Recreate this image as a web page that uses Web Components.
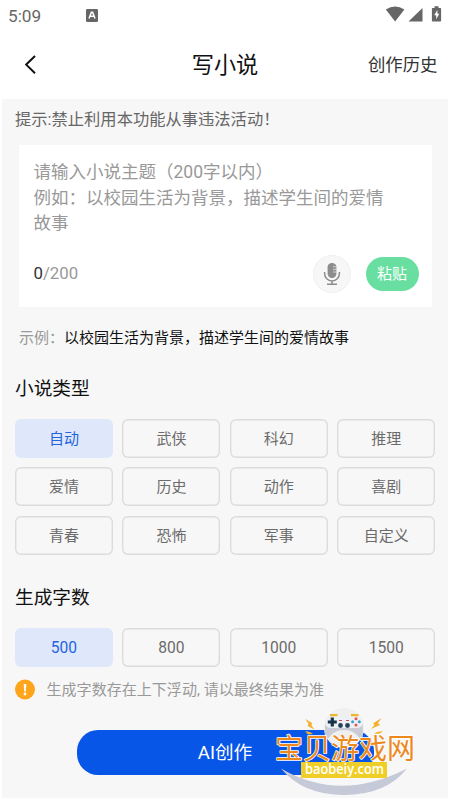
<!DOCTYPE html>
<html lang="zh-CN">
<head>
<meta charset="utf-8">
<title>写小说</title>
<style>
html,body{margin:0;height:100%;background:#fff}
body{font-family:Roboto,"Noto Sans CJK SC",sans-serif;overflow:hidden}
</style>
</head>
<body>
<novel-app></novel-app>
<script>
const define=(name,html)=>customElements.define(name,class extends HTMLElement{
  constructor(){super();const t=document.createElement('template');t.innerHTML=html;
    this.attachShadow({mode:'open'}).append(t.content.cloneNode(true));}
});

define('status-bar',`<style>
:host{display:flex;height:32px;box-sizing:border-box;padding:0 8px;align-items:center;color:#666;font-size:17.2px}
.t{width:78px;line-height:32px}
.sp{flex:1}
svg{display:block}
</style>
<span class="t">5:09</span>
<svg width="12" height="13" viewBox="0 0 12 13" style="margin-top:-2px"><rect width="12" height="13" rx="1.2" fill="#666"/><path d="M3 9.5 5.4 3.2h1.2L9 9.5M4.2 7.2h3.6" fill="none" stroke="#fff" stroke-width="1.5"/></svg>
<span class="sp"></span>
<svg width="57" height="18" viewBox="0 0 57 18" fill="#666" style="margin-top:-2px"><path d="M.8 3.400Q10 -2.300 19.400 3.400L10.100 15.500Z"/><path d="M37.500 2v13.500H23.500Z"/><path d="M49.500.2h4v1.700h1.800q.8 0 .8.8v12q0 .8-.8.8h-7.600q-.8 0-.8-.8v-12q0-.8.8-.8h1.800Z"/><path d="M52.400 4 49.200 9.200h2v4l3.100-5.400h-1.900Z" fill="#fff"/></svg>`);

define('nav-bar',`<style>
:host{display:grid;grid-template-columns:1fr auto 1fr;height:66.5px;align-items:center;padding:0 12.5px 0 12.5px;color:#111}
svg{display:block;margin-left:11.5px}
.h{font-size:22.200px;line-height:32px}
.r{justify-self:end;font-size:17.400px;line-height:26px;color:#333}
</style>
<svg width="14" height="20" viewBox="0 0 14 20"><path d="M11 1 2.200 9.600 11 18.200" fill="none" stroke="#111" stroke-width="2"/></svg>
<span class="h"><slot></slot></span><span class="r"><slot name="action"></slot></span>`);

define('theme-input',`<style>
:host{display:flex;flex-direction:column;box-sizing:border-box;background:#fff;height:162px;width:413px;margin-left:16.500px;padding:15px 13px 0 15px;font-size:17.500px;line-height:25.600px;color:#999}
.ph{height:76.500px;white-space:nowrap}
.row{display:flex;align-items:center;height:37.500px;margin-top:18.500px;font-size:16.800px}
.n{padding-top:1px}
b{font-weight:400;color:#333}
.sp{flex:1}
.mic{display:grid;place-items:center;box-sizing:border-box;width:37.500px;height:37.500px;border-radius:50%;background:#f7f7f7;border:1px solid #f0f0f0;margin-right:15px}
.paste{width:53px;height:33.500px;border-radius:17px;background:#68dfa0;color:#fff;font-size:15px;line-height:34px;text-align:center}
</style>
<div class="ph">请输入小说主题（200字以内）<br>例如：以校园生活为背景，描述学生间的爱情<br>故事</div>
<div class="row"><span class="n"><b>0</b>/200</span><span class="sp"></span>
<span class="mic"><svg width="18" height="24" viewBox="0 0 18 24"><rect x="4.600" y="1" width="8.800" height="15" rx="4.200" fill="#8d8d8d"/><path d="M1.600 10v1.500a7.400 7.400 0 0 0 14.800 0V10M9 19v3M4 22.300h10" fill="none" stroke="#8d8d8d" stroke-width="1.500"/><path d="M10 4.800h4M10 7.400h4M10 10h4" stroke="#ddd" stroke-width=".9"/></svg></span>
<span class="paste">粘贴</span></div>`);

define('option-grid',`<style>
:host{display:grid;grid-template-columns:repeat(4,98px);column-gap:9.400px;row-gap:9.800px;margin-left:13px}
</style><slot></slot>`);

define('option-chip',`<style>
:host{display:block;box-sizing:border-box;height:39px;box-shadow:inset 0 0 0 1.400px #dcdcdc;border-radius:6px;color:#6b6b6b;font-size:15px;line-height:40px;text-align:center}
:host([num]){font-size:15.600px;line-height:41px}
:host([on]){background:#dee8fa;box-shadow:none;color:#2563e0}
</style><slot></slot>`);

define('section-title',`<style>
:host{display:block;font-size:18.700px;line-height:28px;height:28px;padding-left:13px;color:#111}
</style><slot></slot>`);

define('info-note',`<style>
:host{display:flex;align-items:center;height:22px;padding-left:13px;gap:11.500px;color:#999;font-size:15.050px;line-height:22px}
svg{display:block}
span{padding-top:1px}
</style><svg width="20" height="21" viewBox="0 0 20 21"><circle cx="10" cy="10.500" r="10" fill="#ffa51c"/><path d="M8.700 5h2.600l-.5 7.600H9.200Z" fill="#fff"/><circle cx="10" cy="15" r="1.400" fill="#fff"/></svg><span><slot></slot></span>`);

define('create-button',`<style>
:host{display:block;width:297px;height:45px;margin:0 0 0 74.500px;border-radius:21px;background:#0756e8;color:#fff;font-size:18.600px;line-height:46px;text-align:center}
</style><slot></slot>`);

define('site-watermark',`<style>
:host{position:absolute;left:260px;top:700px;width:160px;height:98px}
svg{display:block}
.cn{font:400 28px "Noto Sans CJK SC",sans-serif}
.en{font:600 14px "Open Sans","Noto Sans",sans-serif}
</style><svg width="160" height="98" viewBox="0 0 160 98">
<circle cx="84" cy="28" r="20" fill="#efefef"/>
<path d="M21 68.500Q80 103 147 68.500Q126 95 84 95Q43 95 21 68.500Z" fill="#c5c9d8"/>
<path d="M67 18Q64.500 24 64.800 37Q67 41 71 35Q76 30 84 30Q92 30 97 35Q101 41 102.700 37Q103.500 24 101 18Z" fill="#c9ccd6"/>
<path d="M70 15.300h7.500M91 15.300h7.500" stroke="#efb52b" stroke-width="2.500"/>
<path d="M70 16.500H98Q103 17 102.800 23Q102 28 96 28H72Q65.500 28 65.200 23Q65 17 70 16.500Z" fill="#edf0f4"/>
<path d="M72.300 17.500v9M67.800 22h9" stroke="#173449" stroke-width="3.200"/>
<circle cx="80.500" cy="25.500" r="2.400" fill="#244259"/><circle cx="87.500" cy="25.500" r="2.400" fill="#244259"/>
<circle cx="96" cy="18.700" r="1.500" fill="#e84e54"/><circle cx="96" cy="25" r="1.500" fill="#e84e54"/><circle cx="92.600" cy="21.800" r="1.500" fill="#37a3c5"/><circle cx="99.300" cy="21.800" r="1.500" fill="#37a3c5"/><path d="M79 20.500h3M86 20.500h3" stroke="#c14f66"/>
<g fill="#f3b22d"><path d="M45.500 19 52 23l-.5 2.500 3 4-7-3.500 1-2Z"/><path d="M121.500 18 113 23.500l1.500 1.500-3.500 4 9-4-2-2Z"/><path d="m45 31 5 1 3 2-5 .5Z"/><path d="m123 31-6 1-3 2 6-.5Z"/></g>
<text class="cn" x="15" y="59" textLength="140" fill="#ed891c" stroke="#fff" stroke-width="1.500" stroke-linejoin="round" paint-order="stroke">宝贝游戏网</text>
<rect x="41" y="62" width="86" height="16" fill="#efcf27"/>
<text class="en" x="45" y="74.200" textLength="79" lengthAdjust="spacingAndGlyphs" fill="#fff">baobeiy.com</text>
</svg>`);

define('novel-app',`<style>
:host{display:block;width:450px;height:800px;position:relative;background:#fff}
main{box-sizing:border-box;display:flex;flex-direction:column;height:699.500px;margin:0 2px;background:#f7f7f7}
.tip{padding:9px 0 0 13px;font-size:16.300px;line-height:24px;height:37.500px;color:#666}
.ex{font-size:15px;line-height:22px;padding:19.500px 0 0 17px;color:#999;white-space:nowrap}
.ex b{font-weight:400;color:#111}
</style>
<status-bar></status-bar>
<nav-bar>写小说<span slot="action">创作历史</span></nav-bar>
<main>
<div class="tip">提示:禁止利用本功能从事违法活动！</div>
<theme-input></theme-input>
<div class="ex">示例：<b>以校园生活为背景，描述学生间的爱情故事</b></div>
<section-title style="margin-top:26px">小说类型</section-title>
<option-grid style="margin-top:16px">
<option-chip on>自动</option-chip><option-chip>武侠</option-chip><option-chip>科幻</option-chip><option-chip>推理</option-chip>
<option-chip>爱情</option-chip><option-chip>历史</option-chip><option-chip>动作</option-chip><option-chip>喜剧</option-chip>
<option-chip>青春</option-chip><option-chip>恐怖</option-chip><option-chip>军事</option-chip><option-chip>自定义</option-chip>
</option-grid>
<section-title style="margin-top:28.500px">生成字数</section-title>
<option-grid style="margin-top:16px">
<option-chip num on>500</option-chip><option-chip num>800</option-chip><option-chip num>1000</option-chip><option-chip num>1500</option-chip>
</option-grid>
<info-note style="margin-top:12px">生成字数存在上下浮动, 请以最终结果为准</info-note>
<create-button style="margin-top:29px">AI创作</create-button>
</main>
<site-watermark></site-watermark>`);
</script>
</body>
</html>
